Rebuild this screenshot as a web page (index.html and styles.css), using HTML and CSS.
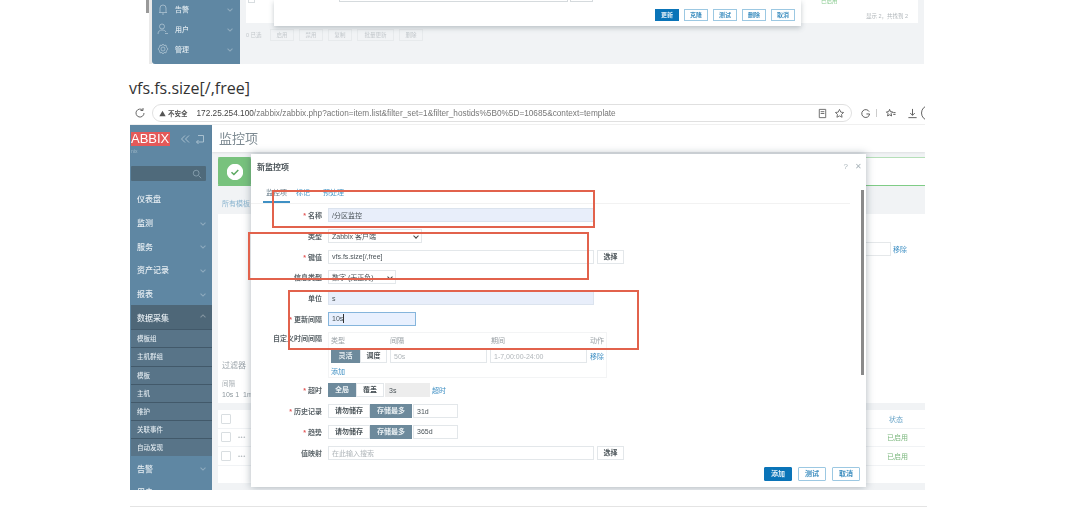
FILE: index.html
```html
<!DOCTYPE html>
<html lang="en">
<head>
    <meta charset="UTF-8">
    <meta name="viewport" content="width=device-width, initial-scale=1.0">
    <title>vfs.fs.size</title>
    <link rel="stylesheet" href="styles.css">
</head>
<body>
    <div class="post">
        <!-- first screenshot, cropped -->
        <div class="shot-top">
            <div class="old-scroll"><span></span></div>
            <div class="old-side">
                <div class="old-item">
                    <svg class="old-icon" viewBox="0 0 12 12"><path d="M2 9.500h8M3 9.500V5a3 3 0 0 1 6 0v4.500M5 11h2"/></svg>
                    <span>告警</span><i class="chev"></i>
                </div>
                <div class="old-item">
                    <svg class="old-icon" viewBox="0 0 12 12"><circle cx="5" cy="3.500" r="2.500"/><path d="M1 11c0-3 2-4 4-4s3 .5 4 2M8 10.500h3"/></svg>
                    <span>用户</span><i class="chev"></i>
                </div>
                <div class="old-item">
                    <svg class="old-icon" viewBox="0 0 12 12"><circle cx="6" cy="6" r="2"/><path d="M6 1l1 1.500 2-.3.500 2L11 6l-1.500 1.800-.5 2-2-.3L6 11l-1-1.500-2 .3-.5-2L1 6l1.500-1.800.5-2 2 .3z"/></svg>
                    <span>管理</span><i class="chev"></i>
                </div>
            </div>
            <div class="old-main">
                <div class="old-table">
                    <span class="old-check"></span>
                    <div class="old-table-right">
                        <span class="old-enabled">已启用</span>
                        <span class="old-count">显示 2，共找到 2</span>
                    </div>
                </div>
                <div class="old-actions">
                    <span class="old-selected">0 已选</span>
                    <span class="old-btn">启用</span>
                    <span class="old-btn">禁用</span>
                    <span class="old-btn">复制</span>
                    <span class="old-btn wide">批量更新</span>
                    <span class="old-btn">删除</span>
                </div>
                <div class="old-dialog">
                    <div class="old-inputs"><span class="old-input"></span><span class="old-input short"></span></div>
                    <div class="old-buttons">
                        <span class="btn-small primary">更新</span>
                        <span class="btn-small">克隆</span>
                        <span class="btn-small">测试</span>
                        <span class="btn-small">删除</span>
                        <span class="btn-small">取消</span>
                    </div>
                </div>
            </div>
        </div>

        <p class="caption">vfs.fs.size[/,free]</p>

        <!-- second screenshot -->
        <div class="shot">
            <div class="browser-bar">
                <svg class="reload" viewBox="0 0 12 12"><path d="M10 6a4 4 0 1 1-1.200-2.800M9 1v2.500H6.500"/></svg>
                <div class="address">
                    <svg class="warn" viewBox="0 0 10 10"><path d="M5 1l4.500 8h-9z"/></svg>
                    <span class="insecure">不安全</span>
                    <span class="url"><b>172.25.254.100</b>/zabbix/zabbix.php?action=item.list&amp;filter_set=1&amp;filter_hostids%5B0%5D=10685&amp;context=template</span>
                    <svg class="addr-icon" viewBox="0 0 12 12"><path d="M2.500 1.500h7v9h-7zM4 4h4M4 6h4"/></svg>
                    <svg class="addr-icon" viewBox="0 0 12 12"><path d="M6 1.500l1.400 3 3.100.4-2.300 2.100.6 3.100L6 8.600l-2.800 1.500.6-3.100L1.500 4.900l3.100-.4z"/></svg>
                </div>
                <div class="bar-icons">
                    <svg viewBox="0 0 12 12"><path d="M10 4a4.300 4.300 0 1 0 .5 2.500H7"/></svg>
                    <span class="bar-sep"></span>
                    <svg class="bar-fav" viewBox="0 0 12 12"><path d="M5 1.500l1 2.500 2.500.3-1.800 1.800.5 2.600L5 7.400 2.800 8.700l.5-2.600L1.500 4.300 4 4zM9 5h2.500M9 7h2.500"/></svg>
                    <svg class="bar-down" viewBox="0 0 12 12"><path d="M6 1v7M3.500 5.500L6 8l2.500-2.500M1.500 10.500h9"/></svg>
                    <span class="bar-round"></span>
                </div>
            </div>
            <div class="app">
                <aside class="side">
                    <div class="side-top">
                        <span class="logo">ABBIX</span>
                        <span class="side-tools">
                            <svg viewBox="0 0 10 10"><path d="M5 1.500L1.500 5 5 8.500M9 1.500L5.500 5 9 8.500"/></svg>
                            <svg viewBox="0 0 10 10"><path d="M3 1.500h5.500v6.500h-7M3.500 6L1.500 8l2 2"/></svg>
                        </span>
                    </div>
                    <div class="side-sub">nix</div>
                    <div class="search">
                        <svg viewBox="0 0 12 12"><circle cx="5" cy="5" r="3.500"/><path d="M8 8l3 3"/></svg>
                    </div>
                    <nav class="menu">
                        <div class="menu-item">仪表盘</div>
                        <div class="menu-item">监测<i class="chev"></i></div>
                        <div class="menu-item">服务<i class="chev"></i></div>
                        <div class="menu-item">资产记录<i class="chev"></i></div>
                        <div class="menu-item">报表<i class="chev"></i></div>
                        <div class="menu-group">
                            <div class="menu-item">数据采集<i class="chev up"></i></div>
                            <div class="sub-item">模板组</div>
                            <div class="sub-item">主机群组</div>
                            <div class="sub-item">模板</div>
                            <div class="sub-item">主机</div>
                            <div class="sub-item">维护</div>
                            <div class="sub-item">关联事件</div>
                            <div class="sub-item">自动发现</div>
                        </div>
                        <div class="menu-item">告警<i class="chev"></i></div>
                        <div class="menu-item">用户</div>
                    </nav>
                </aside>
                <main class="main">
                    <div class="page-head">监控项</div>
                    <div class="message">
                        <span class="message-icon">
                            <svg viewBox="0 0 16 16"><circle cx="8" cy="8" r="7.500"/><path d="M4.500 8.200l2.400 2.300 4.400-4.500"/></svg>
                        </span>
                    </div>
                    <div class="crumb">所有模板</div>
                    <div class="panel">
                        <div class="panel-row"><span class="ghost-input"></span><a class="link">移除</a></div>
                        <div class="filter-title">过滤器</div>
                        <div class="filter-label">间隔</div>
                        <div class="filter-value">10s 1 &nbsp;1m</div>
                    </div>
                    <div class="table">
                        <div class="table-row"><span class="check"></span><span class="status head">状态</span></div>
                        <div class="table-row"><span class="check"></span><span class="dots">•••</span><span class="status">已启用</span></div>
                        <div class="table-row"><span class="check"></span><span class="dots">•••</span><span class="status">已启用</span></div>
                    </div>
                </main>

                <div class="dialog">
                    <div class="dialog-title">
                        <span>新监控项</span>
                        <span class="dialog-tools"><span>?</span><span>✕</span></span>
                    </div>
                    <div class="tabs">
                        <span class="tab active">监控项</span>
                        <span class="tab">标记</span>
                        <span class="tab">预处理</span>
                    </div>
                    <div class="form">
                        <div class="row">
                            <label><em>*</em> 名称</label>
                            <span class="field long filled">/分区监控</span>
                        </div>
                        <div class="row">
                            <label>类型</label>
                            <span class="field select type">Zabbix 客户端<i class="caret"></i></span>
                        </div>
                        <div class="row">
                            <label><em>*</em> 键值</label>
                            <span class="field long">vfs.fs.size[/,free]</span>
                            <span class="btn-plain">选择</span>
                        </div>
                        <div class="row">
                            <label>信息类型</label>
                            <span class="field select info">数字 (无正负)<i class="caret"></i></span>
                        </div>
                        <div class="row">
                            <label>单位</label>
                            <span class="field long filled">s</span>
                        </div>
                        <div class="row">
                            <label><em>*</em> 更新间隔</label>
                            <span class="field focus">10s<i class="text-caret"></i></span>
                        </div>
                        <div class="row custom">
                            <label>自定义时间间隔</label>
                            <div class="interval-box">
                                <div class="interval-head">
                                    <span class="col-type">类型</span>
                                    <span class="col-delay">间隔</span>
                                    <span class="col-period">期间</span>
                                    <span>动作</span>
                                </div>
                                <div class="interval-row">
                                    <span class="toggle on narrow">灵活</span>
                                    <span class="toggle narrow2">调度</span>
                                    <span class="field delay muted">50s</span>
                                    <span class="field delay muted">1-7,00:00-24:00</span>
                                    <a class="link">移除</a>
                                </div>
                                <a class="link add">添加</a>
                            </div>
                        </div>
                        <div class="row timeout">
                            <label><em>*</em> 超时</label>
                            <span class="toggle on">全局</span>
                            <span class="toggle">覆盖</span>
                            <span class="field disabled">3s</span>
                            <a class="link">超时</a>
                        </div>
                        <div class="row">
                            <label><em>*</em> 历史记录</label>
                            <span class="toggle wide">请勿储存</span>
                            <span class="toggle on wide">存储最多</span>
                            <span class="field days">31d</span>
                        </div>
                        <div class="row">
                            <label><em>*</em> 趋势</label>
                            <span class="toggle wide">请勿储存</span>
                            <span class="toggle on wide">存储最多</span>
                            <span class="field days">365d</span>
                        </div>
                        <div class="row">
                            <label>值映射</label>
                            <span class="field long muted">在此输入搜索</span>
                            <span class="btn-plain">选择</span>
                        </div>
                    </div>
                    <div class="dialog-foot">
                        <span class="btn primary">添加</span>
                        <span class="btn">测试</span>
                        <span class="btn">取消</span>
                    </div>
                    <div class="dialog-scroll"></div>
                </div>

                <div class="mark mark-name"></div>
                <div class="mark mark-key"></div>
                <div class="mark mark-unit"></div>
            </div>
        </div>

        <hr class="rule">
    </div>
</body>
</html>
```

FILE: styles.css
```css
* {
    margin: 0;
    padding: 0;
    box-sizing: border-box;
}

body {
    font-family: "Liberation Sans", "Noto Sans CJK SC", sans-serif;
    background: #fff;
    overflow: hidden;
}

.post {
    width: 797px;
    margin-left: 130px;
}

svg {
    fill: none;
    stroke: currentColor;
    stroke-width: 1;
}

.chev {
    width: 4px;
    height: 4px;
    margin-left: auto;
    border-right: 1px solid rgba(255, 255, 255, 0.3);
    border-bottom: 1px solid rgba(255, 255, 255, 0.3);
    transform: rotate(45deg);
}

.chev.up {
    transform: rotate(225deg);
}

/* first screenshot */
.shot-top {
    position: relative;
    display: flex;
    width: 794px;
    height: 64px;
    filter: blur(0.6px);
}

.old-scroll {
    width: 22px;
    border-right: 3px solid #eaeaea;
}

.old-scroll span {
    display: block;
    width: 3px;
    height: 13px;
    margin-left: 16px;
    background: #999;
}

.old-side {
    width: 88px;
    background: #5f87a3;
    border-bottom-left-radius: 3px;
}

.old-item {
    display: flex;
    align-items: center;
    height: 20px;
    padding: 0 8px 0 5px;
    color: #dfe9ef;
    font-size: 7px;
    font-weight: 500;
    position: relative;
    top: -1px;
}

.old-icon {
    width: 12px;
    height: 12px;
    margin-right: 6px;
    stroke-width: 0.7;
    opacity: 0.7;
}

.old-main {
    position: relative;
    flex: 1;
    background: #f1f3f5;
    padding-left: 6px;
}

.old-table {
    display: flex;
    justify-content: space-between;
    width: 672px;
    height: 23px;
    background: #fff;
    padding-left: 2px;
}

.old-check {
    width: 7px;
    height: 3px;
    border: 1px solid #d8dde0;
    border-top: 0;
}

.old-table-right {
    display: flex;
    flex-direction: column;
    width: 97px;
    font-size: 5.500px;
}

.old-enabled {
    height: 5px;
    line-height: 2px;
    color: #86c98d;
}

.old-count {
    margin-top: 7px;
    margin-left: 45px;
    color: #b0b6ba;
    white-space: nowrap;
}

.old-actions {
    display: flex;
    align-items: center;
    gap: 5px;
    height: 12px;
    margin-top: 6px;
    font-size: 5.500px;
    color: #c3c8cc;
}

.old-selected {
    width: 19px;
}

.old-btn {
    width: 24px;
    height: 12px;
    border: 1px solid #e7eaec;
    text-align: center;
    line-height: 10px;
}

.old-btn.wide {
    width: 37px;
}

.old-dialog {
    position: absolute;
    top: 0;
    left: 34px;
    width: 527px;
    height: 26px;
    background: #fff;
    box-shadow: 0 2px 5px rgba(60, 80, 90, 0.3);
}

.old-inputs {
    display: flex;
    gap: 2px;
    margin-left: 65px;
}

.old-input {
    width: 229px;
    height: 2px;
    border: 1px solid #d5dadd;
    border-top: 0;
}

.old-input.short {
    width: 23px;
}

.old-buttons {
    display: flex;
    justify-content: flex-end;
    gap: 5px;
    margin: 7px 6px 0 0;
}

.btn-small {
    width: 24px;
    height: 12px;
    border: 1px solid #9cc8e2;
    color: #3f8fc0;
    font-size: 6px;
    font-weight: 700;
    line-height: 10px;
    text-align: center;
}

.btn-small.primary {
    background: #0a74b8;
    border-color: #0a74b8;
    color: #e6f1f8;
}

.caption {
    height: 38px;
    padding-top: 13px;
    margin-left: -1px;
    font-family: "Open Sans", sans-serif;
    font-size: 16px;
    line-height: 22px;
    color: #333;
}

/* second screenshot */
.shot {
    width: 795px;
    filter: blur(0.6px);
}

.browser-bar {
    display: flex;
    align-items: center;
    height: 23px;
    padding-left: 4px;
    overflow: hidden;
    border-bottom: 1px solid #f0f0f0;
}

.reload {
    flex: none;
    width: 12px;
    height: 12px;
    color: #666;
}

.address {
    flex: none;
    display: flex;
    align-items: center;
    width: 700px;
    height: 18px;
    margin-left: 6px;
    padding-left: 6px;
    border: 1px solid #e0e0e0;
    border-radius: 9px;
    font-size: 8.250px;
    color: #777;
    white-space: nowrap;
}

.warn {
    width: 7px;
    height: 7px;
    fill: #555;
    stroke: none;
}

.insecure {
    margin: 0 9px 0 2px;
    font-size: 6.500px;
    font-weight: 700;
    color: #555;
}

.url {
    flex: 1;
}

.url b {
    font-weight: 400;
    color: #444;
}

.addr-icon {
    flex: none;
    width: 11px;
    height: 11px;
    margin-right: 6px;
    color: #666;
}

.bar-icons {
    flex: none;
    display: flex;
    align-items: center;
    gap: 5px;
    margin-left: 8px;
    color: #555;
}

.bar-icons svg {
    flex: none;
    width: 11px;
    height: 11px;
}

.bar-icons .bar-fav {
    margin-left: 3px;
}

.bar-icons .bar-down {
    margin-left: 6px;
}

.bar-sep {
    width: 1px;
    height: 8px;
    background: #ccc;
}

.bar-round {
    flex: none;
    width: 16px;
    height: 16px;
    margin-left: -2px;
    border: 1px solid #666;
    border-radius: 50%;
}

.app {
    position: relative;
    display: flex;
    height: 365px;
    overflow: hidden;
    background: #f1f3f5;
}

.side {
    width: 82px;
    padding-left: 1px;
    background: #5f87a3;
    color: #e6edf2;
}

.side-top {
    display: flex;
    align-items: center;
    height: 14px;
    margin-top: 7px;
}

.logo {
    width: 39px;
    height: 14px;
    background: #e45959;
    color: #fff;
    font-size: 13px;
    line-height: 14px;
    text-align: right;
    padding-right: 1px;
    overflow: hidden;
}

.side-tools {
    display: flex;
    gap: 5px;
    margin-left: 10px;
    color: #a9c0cf;
}

.side-tools svg {
    width: 10px;
    height: 10px;
}

.side-sub {
    height: 20px;
    padding-top: 2px;
    font-size: 5px;
    color: #9fb7c6;
}

.search {
    display: flex;
    justify-content: flex-end;
    align-items: center;
    width: 75px;
    height: 15px;
    padding-right: 4px;
    background: #4f6a7b;
    border-radius: 1px;
    color: #8ba3b2;
}

.search svg {
    width: 10px;
    height: 10px;
}

.menu {
    margin-top: 6px;
    font-size: 8px;
    font-weight: 500;
}

.menu-item {
    display: flex;
    align-items: center;
    height: 23.700px;
    padding: 0 7px 0 6px;
}

.menu-group {
    background: #4e6778;
}

.sub-item {
    height: 18.200px;
    padding-left: 6px;
    border-top: 1px solid #42596a;
    background: #587488;
    font-size: 6.500px;
    line-height: 17px;
    color: #dfe8ee;
}

.main {
    flex: 1;
}

.page-head {
    height: 27px;
    padding-left: 7px;
    background: #fff;
    font-size: 13px;
    line-height: 27px;
    color: #7d8a92;
    box-shadow: 0 1px 2px rgba(0, 0, 0, 0.08);
}

.message {
    height: 29px;
    margin: 5px 0 0 6px;
    background: #fff;
    border-top: 1px solid #b5dfb8;
    border-bottom: 1px solid #7fcc86;
}

.message-icon {
    display: flex;
    justify-content: center;
    align-items: center;
    width: 33px;
    height: 29px;
    margin-top: -1px;
    background: #78c27d;
    border-radius: 2px;
}

.message-icon svg {
    width: 16px;
    height: 16px;
    color: #fff;
    stroke-width: 1.500;
    fill: #fff;
}

.message-icon path {
    stroke: #5aa85f;
    fill: none;
}

.crumb {
    height: 28px;
    padding: 12px 0 0 10px;
    font-size: 7px;
    color: #8ab4cf;
}

.panel {
    display: flex;
    flex-direction: column;
    height: 189px;
    margin-left: 6px;
    padding-left: 4px;
    background: #fff;
    font-size: 7px;
    color: #a9b0b5;
}

.panel-row {
    display: flex;
    justify-content: flex-end;
    align-items: center;
    gap: 2px;
    height: 14px;
    margin-top: 28px;
    padding-right: 18px;
}

.ghost-input {
    width: 40px;
    height: 14px;
    border: 1px solid #e5e8ea;
}

.filter-title {
    margin-top: 104px;
    height: 18px;
    font-size: 8px;
    line-height: 12px;
    color: #9aa3a9;
}

.filter-label {
    height: 13px;
    font-size: 6.500px;
}

.filter-value {
    font-size: 7px;
    color: #8d979d;
}

.table {
    height: 73px;
    margin: 7px 0 0 6px;
    background: #fff;
}

.table-row {
    display: flex;
    align-items: center;
    height: 18.500px;
    padding-left: 3px;
    border-bottom: 1px solid #f1f3f5;
    font-size: 7px;
}

.check {
    width: 10px;
    height: 10px;
    border: 1px solid #d9dee1;
    border-radius: 1px;
}

.dots {
    margin-left: 7px;
    font-size: 6px;
    letter-spacing: 0.5px;
    color: #b7bdc1;
}

.status {
    margin-left: auto;
    margin-right: 17px;
    color: #7cb87f;
    font-size: 7px;
}

.status.head {
    color: #6aa5c9;
    margin-right: 22px;
}

.link {
    color: #3f90c4;
    font-size: 7px;
    font-weight: 400;
    white-space: nowrap;
}

/* dialog over the page */
.dialog {
    position: absolute;
    top: 29px;
    left: 121px;
    width: 615px;
    height: 333px;
    padding-top: 6px;
    background: #fff;
    box-shadow: 0 0 8px rgba(50, 70, 85, 0.4);
    font-size: 7px;
    color: #4a5358;
}

.dialog-title {
    display: flex;
    justify-content: space-between;
    align-items: center;
    height: 12px;
    padding: 0 4px 0 6px;
    font-size: 8px;
    font-weight: 700;
}

.dialog-tools {
    display: flex;
    gap: 7px;
    font-weight: 400;
    color: #a9b4ba;
}

.tabs {
    display: flex;
    gap: 6px;
    width: 599px;
    height: 20px;
    margin-top: 12px;
    padding-left: 12px;
    border-bottom: 1px solid #f2f2f2;
}

.tab {
    min-width: 15px;
    height: 19px;
    color: #4b9ac9;
    line-height: 17px;
    margin-right: 6px;
}

.tab.active {
    width: 27px;
    margin-right: 0;
    border-bottom: 2px solid #3f90c4;
    color: #6b7f8c;
    text-align: center;
}

.form {
    margin-top: 1px;
}

.row {
    display: flex;
    align-items: center;
    height: 20.700px;
}

.row label {
    flex: none;
    width: 71px;
    margin-right: 6px;
    text-align: right;
    white-space: nowrap;
    font-weight: 700;
    color: #5b6469;
}

.row label em {
    font-style: normal;
    color: #e45959;
}

.field {
    display: flex;
    align-items: center;
    height: 14px;
    padding-left: 3px;
    border: 1px solid #e3e7ea;
    background: #fff;
    white-space: nowrap;
}

.long {
    width: 266px;
}

.filled {
    background: #e8eefa;
    border-color: #dbe3ee;
}

.select {
    justify-content: space-between;
    padding-right: 3px;
}

.type {
    width: 94px;
}

.info {
    width: 68px;
}

.caret {
    width: 4px;
    height: 4px;
    border-right: 1px solid #444;
    border-bottom: 1px solid #444;
    transform: rotate(45deg);
}

.focus {
    width: 88px;
    background: #e8f0fe;
    border-color: #85b5dc;
}

.text-caret {
    width: 1px;
    height: 9px;
    background: #333;
}

.btn-plain {
    width: 27px;
    height: 14px;
    margin-left: 3px;
    border: 1px solid #e3e7ea;
    line-height: 12px;
    text-align: center;
    font-weight: 700;
}

.row.custom {
    align-items: flex-start;
    height: 51px;
    padding-top: 3px;
}

.row.custom label {
    line-height: 14px;
}

.interval-box {
    width: 279px;
    height: 46px;
    padding: 1px 2px;
    border: 1px solid #f3f4f5;
    color: #9aa1a6;
}

.interval-head {
    display: flex;
    height: 14px;
    line-height: 14px;
}

.col-type {
    width: 59px;
}

.col-delay {
    width: 101px;
}

.col-period {
    width: 99px;
}

.interval-row {
    display: flex;
    align-items: center;
    height: 16px;
}

.toggle {
    flex: none;
    width: 28px;
    height: 14px;
    border: 1px solid #e3e7ea;
    background: #fff;
    color: #4a5358;
    line-height: 12px;
    text-align: center;
    font-weight: 700;
}

.toggle.on {
    background: #6d8a9c;
    border-color: #6d8a9c;
    color: #eaf0f3;
}

.toggle.narrow {
    width: 29px;
}

.toggle.narrow2 {
    width: 27px;
}

.toggle.wide {
    width: 42px;
}

.delay {
    flex: none;
    width: 97px;
    margin-left: 3px;
}

.interval-row .link {
    margin-left: 3px;
}

.muted {
    color: #b0b6ba;
}

.add {
    display: block;
    margin-top: 2px;
    line-height: 12px;
}

.timeout .disabled {
    width: 45px;
    margin: 0 2px 0 1px;
    background: #ededed;
    border-color: #ededed;
}

.days {
    width: 45px;
    margin-left: 1px;
}

.dialog-foot {
    position: absolute;
    right: 6px;
    bottom: 6px;
    display: flex;
    gap: 6px;
}

.btn {
    width: 28px;
    height: 14px;
    border: 1px solid #9cc8e2;
    border-radius: 1px;
    color: #3f8fc0;
    line-height: 12px;
    text-align: center;
    font-weight: 700;
}

.btn.primary {
    background: #0a74b8;
    border-color: #0a74b8;
    color: #e6f1f8;
}

.dialog-scroll {
    position: absolute;
    top: 36px;
    right: 2px;
    width: 3px;
    height: 185px;
    background: #8a8a8a;
}

/* red boxes drawn on the screenshot */
.mark {
    position: absolute;
    border: 2px solid #e2624c;
}

.mark-name {
    top: 65px;
    left: 142px;
    width: 323px;
    height: 38px;
}

.mark-key {
    top: 107px;
    left: 118px;
    width: 341px;
    height: 48px;
}

.mark-unit {
    top: 165px;
    left: 158px;
    width: 351px;
    height: 60px;
}

.rule {
    height: 1px;
    margin-top: 16px;
    border: 0;
    background: #e4e4e4;
}
```
